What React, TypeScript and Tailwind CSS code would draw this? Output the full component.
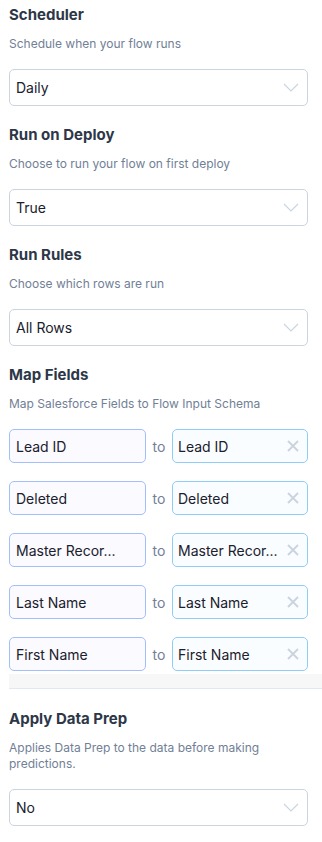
const sections1 = [
  { title: "Scheduler", desc: "Schedule when your flow runs", value: "Daily" },
  { title: "Run on Deploy", desc: "Choose to run your flow on first deploy", value: "True" },
  { title: "Run Rules", desc: "Choose which rows are run", value: "All Rows" },
];

const fields = ["Lead ID", "Deleted", "Master Recor...", "Last Name", "First Name"];

function Chevron() {
  return (
    <svg width="16" height="9" viewBox="0 0 16 9" fill="none" className="shrink-0">
      <path d="M1 1l7 7 7-7" stroke="#cbd5e0" strokeWidth="1.2" />
    </svg>
  );
}

function Cross() {
  return (
    <svg width="12" height="12" viewBox="0 0 12 12" fill="none" className="shrink-0">
      <path d="M1 1l10 10M11 1L1 11" stroke="#cbd5e0" strokeWidth="2" />
    </svg>
  );
}

function Select({ value }: { value: string }) {
  return (
    <div className="flex h-[37px] w-[299px] items-center justify-between rounded-[5px] border border-[#cbd5e0] bg-white pl-[6px] pr-[8px] text-[14px] text-[#1a202c]">
      <span>{value}</span>
      <Chevron />
    </div>
  );
}

function Heading({ title, desc }: { title: string; desc: string }) {
  return (
    <>
      <h2 className="text-[15px] font-bold leading-5 text-[#2d3748]">{title}</h2>
      <p className="mt-[11px] text-[12px] leading-4 text-[#718096]">{desc}</p>
    </>
  );
}

export default function App() {
  return (
    <div className="min-h-[842px] bg-white pl-[9px] pt-[5px]" style={{ fontFamily: "Inter, 'Noto Sans', sans-serif" }}>
      {sections1.map((s) => (
        <section key={s.title} className="mb-[19px]">
          <Heading title={s.title} desc={s.desc} />
          <div className="mt-[17px]">
            <Select value={s.value} />
          </div>
        </section>
      ))}

      <section>
        <Heading title="Map Fields" desc="Map Salesforce Fields to Flow Input Schema" />
        <div className="mt-[17px] flex flex-col gap-[18px]">
          {fields.map((f) => (
            <div key={f} className="flex items-center">
              <div className="flex h-[34px] w-[137px] items-center rounded-[5px] border border-[#a3bffa] bg-[#fafaff] px-[6px] text-[14px] text-[#1a202c]">
                {f}
              </div>
              <span className="w-[26px] text-center text-[14px] text-[#718096]">to</span>
              <div className="flex h-[34px] w-[136px] items-center justify-between rounded-[5px] border border-[#90cdf4] bg-[#fafdff] pl-[5px] pr-[8px] text-[14px] text-[#1a202c]">
                <span>{f}</span>
                <Cross />
              </div>
            </div>
          ))}
        </div>
      </section>

      <div className="mt-[3px] h-[15px] border-b border-[#e2e8f0] bg-[#f7f7f7]" />

      <section className="mt-[20px]">
        <h2 className="text-[15px] font-bold leading-5 text-[#2d3748]">Apply Data Prep</h2>
        <p className="mt-[11px] w-[290px] text-[12px] leading-4 text-[#718096]">
          Applies Data Prep to the data before making predictions.
        </p>
        <div className="mt-[17px]">
          <Select value="No" />
        </div>
      </section>
    </div>
  );
}
